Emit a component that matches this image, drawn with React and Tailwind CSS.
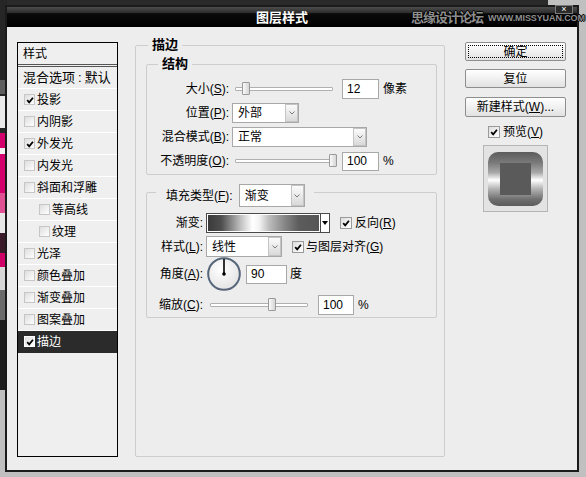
const cjk = "font-['Liberation_Sans','Noto_Sans_CJK_SC',sans-serif]";

const effects = [
  { label: "投影", checked: true },
  { label: "内阴影" },
  { label: "外发光", checked: true },
  { label: "内发光" },
  { label: "斜面和浮雕" },
  { label: "等高线", sub: true },
  { label: "纹理", sub: true },
  { label: "光泽" },
  { label: "颜色叠加" },
  { label: "渐变叠加" },
  { label: "图案叠加" },
  { label: "描边", checked: true, active: true },
];

function Check({ className }) {
  return (
    <svg viewBox="0 0 10 10" className={className}>
      <path d="M1.5 5.2 L4 7.9 L8.7 2.2" fill="none" stroke="currentColor" strokeWidth="2.2" />
    </svg>
  );
}

function CheckBox({ checked, className = "h-[12px] w-[12px] border-[#9a9a9a]" }) {
  return (
    <span className={`flex shrink-0 items-center justify-center border bg-[linear-gradient(135deg,#dedede,#ffffff)] text-black ${className}`}>
      {checked && <Check className="h-[8px] w-[8px]" />}
    </span>
  );
}

function Key({ k }) {
  return (
    <>
      (<span className="underline">{k}</span>)
    </>
  );
}

function Field({ value, className = "h-[20px] w-[37px]" }) {
  return (
    <div className={`flex shrink-0 items-center border border-[#a8a8a8] bg-white pl-[4px] ${className}`}>
      {value}
    </div>
  );
}

function Chevron() {
  return (
    <svg viewBox="0 0 6 4" className="h-[4px] w-[6px]">
      <path d="M0.5 0.5 L3 3 L5.5 0.5" fill="none" stroke="#7a7a7a" strokeWidth="1" />
    </svg>
  );
}

function Select({ value, className }) {
  return (
    <div className={`flex shrink-0 border border-[#a8a8a8] bg-white ${className}`}>
      <span className="flex flex-1 items-center pl-[5px]">{value}</span>
      <span className="flex w-[13px] items-center justify-center border border-[#c4c4c4] bg-[linear-gradient(to_bottom,#fbfbfb,#d9d9d9)]">
        <Chevron />
      </span>
    </div>
  );
}

function Slider({ pos }) {
  // pos: 0..1 along the 98px track
  const left = Math.round(pos * 98) - 2;
  return (
    <div className="relative flex h-[20px] w-[98px] shrink-0 items-center">
      <div className="h-[4px] w-full rounded-[1px] border border-[#b0b0b0] bg-white" />
      <div
        className="absolute top-[3px] h-[13px] w-[8px] rounded-[1px] border border-[#9a9a9a] bg-[linear-gradient(to_right,#fafafa,#d6d6d6)]"
        style={{ left }}
      />
    </div>
  );
}

function Dial() {
  return (
    <svg viewBox="0 0 34 34" className="h-[34px] w-[34px] shrink-0">
      <defs>
        <radialGradient id="dialbg" cx="0.4" cy="0.35" r="0.7">
          <stop offset="0" stopColor="#ffffff" />
          <stop offset="1" stopColor="#e2e2e2" />
        </radialGradient>
      </defs>
      <circle cx="17" cy="17" r="15.8" fill="url(#dialbg)" stroke="#56657a" strokeWidth="2" />
      <line x1="17" y1="17" x2="17" y2="2" stroke="#000" strokeWidth="1.6" />
      <circle cx="17" cy="17" r="1.8" fill="#000" />
    </svg>
  );
}

function Button({ children, focused, className = "" }) {
  return (
    <div className={`relative flex h-[19px] w-[101px] items-center justify-center rounded-[2px] border border-[#8e8e8e] bg-[linear-gradient(to_bottom,#ffffff,#e2e2e2)] ${className}`}>
      {focused && <span className="absolute inset-[2px] border border-dotted border-black" />}
      {children}
    </div>
  );
}

function Backdrop() {
  return (
    <svg className="absolute inset-0" width="586" height="477" viewBox="0 0 586 477">
      <rect width="586" height="477" fill="#c0c0c0" />
      <rect width="548" height="7" fill="#2a2a2a" />
      <rect width="7" height="390" fill="#262626" />
      <rect y="80" width="7" height="14" fill="#5e5e5e" />
      <rect y="96" width="7" height="32" fill="#eaeaea" />
      <rect y="133" width="7" height="60" fill="#d4006c" />
      <rect y="148" width="7" height="6" fill="#f2f2f2" />
      <rect y="193" width="7" height="20" fill="#e05092" />
      <rect y="213" width="7" height="20" fill="#e6e6e6" />
      <rect y="233" width="7" height="20" fill="#3a1a28" />
      <rect y="253" width="7" height="14" fill="#cf0066" />
      <rect y="267" width="7" height="23" fill="#d8d8d8" />
      <rect y="290" width="7" height="30" fill="#6a6a6a" />
      <rect y="320" width="7" height="70" fill="#1e1e1e" />
    </svg>
  );
}

function StyleList() {
  return (
    <div className="mt-[5px] h-[415px] w-[101px] shrink-0 border border-black bg-[#efefef]">
      <div className="flex h-[24px] items-center border-b-[3px] border-double border-[#555555] pl-[5px]">样式</div>
      <div className="flex h-[22px] items-center border-b border-white pl-[5px] text-[13px]">
        混合选项<span className="px-[3px]">:</span>默认
      </div>
      {effects.map((item, i) => (
        <div
          key={i}
          className={`flex h-[22px] items-center border-b ${item.active ? "border-[#2b2b2b] bg-[#2b2b2b] text-white" : "border-white"} ${item.sub ? "pl-[21px]" : "pl-[6px]"}`}
        >
          <CheckBox
            checked={item.checked}
            className={item.active ? "h-[11px] w-[11px] border-white bg-white" : "h-[11px] w-[11px] border-[#c6c6c6]"}
          />
          <span className="ml-[2px]">{item.label}</span>
        </div>
      ))}
    </div>
  );
}

function StrokePanel() {
  return (
    <fieldset className="ml-[17px] h-[420px] w-[310px] shrink-0 rounded-[2px] border border-[#cdcdcd]">
      <legend className="ml-[12px] px-[4px] text-[13px] font-bold leading-[16px]">描边</legend>
      <div className="pl-[10px] pr-[7px]">
        {/* 结构 */}
        <fieldset className="mt-[3px] rounded-[2px] border border-[#cdcdcd]">
          <legend className="ml-[11px] px-[4px] text-[13px] font-bold leading-[16px]">结构</legend>
          <div className="flex flex-col gap-[4px] pb-[3px] pt-[7px]">
            <div className="flex h-[20px] items-center">
              <span className="w-[82px] shrink-0 text-right">大小<Key k="S" />:</span>
              <div className="ml-[6px]"><Slider pos={0.09} /></div>
              <Field value="12" className="ml-[9px] h-[20px] w-[37px]" />
              <span className="ml-[4px]">像素</span>
            </div>
            <div className="flex h-[20px] items-center">
              <span className="w-[82px] shrink-0 text-right">位置<Key k="P" />:</span>
              <Select value="外部" className="ml-[3px] h-[20px] w-[67px]" />
            </div>
            <div className="flex h-[20px] items-center">
              <span className="w-[82px] shrink-0 text-right">混合模式<Key k="B" />:</span>
              <Select value="正常" className="ml-[3px] h-[20px] w-[135px]" />
            </div>
            <div className="flex h-[20px] items-center">
              <span className="w-[82px] shrink-0 text-right">不透明度<Key k="O" />:</span>
              <div className="ml-[6px]"><Slider pos={0.98} /></div>
              <Field value="100" className="ml-[9px] h-[19px] w-[37px]" />
              <span className="ml-[4px]">%</span>
            </div>
          </div>
        </fieldset>

        {/* 填充 */}
        <fieldset className="mt-[9px] rounded-[2px] border border-[#cdcdcd]">
          <legend className="ml-[9px] h-[16px] pl-[10px] pr-[9px]">
            <div className="flex h-[23px] items-center">
              <span>填充类型<Key k="F" />:</span>
              <Select value="渐变" className="ml-[6px] h-[23px] w-[66px]" />
            </div>
          </legend>
          <div className="flex flex-col pb-[2px] pt-[13px]">
            <div className="flex h-[20px] items-center">
              <span className="w-[56px] shrink-0 text-right">渐变:</span>
              <div className="ml-[3px] flex h-[20px] border border-[#4a4a4a] bg-white">
                <div className="w-[113px] border border-white bg-[linear-gradient(to_right,#3a3a3a_0%,#4e4e4e_12%,#c4c4c4_30%,#ffffff_40%,#f4f4f4_46%,#bdbdbd_55%,#8a8a8a_68%,#5c5c5c_82%,#555555_100%)]" />
                <div className="flex w-[9px] items-center justify-center border-l border-[#4a4a4a]">
                  <svg viewBox="0 0 6 4" className="h-[4px] w-[6px]"><path d="M0 0 L6 0 L3 4 Z" fill="#000" /></svg>
                </div>
              </div>
              <CheckBox checked className="ml-[10px] h-[12px] w-[12px] border-[#9a9a9a]" />
              <span className="ml-[3px]">反向<Key k="R" /></span>
            </div>
            <div className="mt-[3px] flex h-[21px] items-center">
              <span className="w-[56px] shrink-0 text-right">样式<Key k="L" />:</span>
              <Select value="线性" className="ml-[3px] h-[21px] w-[76px]" />
              <CheckBox checked className="ml-[10px] h-[12px] w-[12px] border-[#9a9a9a]" />
              <span className="ml-[2px]">与图层对齐<Key k="G" /></span>
            </div>
            <div className="flex h-[34px] items-center">
              <span className="w-[56px] shrink-0 text-right">角度<Key k="A" />:</span>
              <div className="ml-[4px]"><Dial /></div>
              <Field value="90" className="ml-[5px] h-[19px] w-[41px]" />
              <span className="ml-[3px]">度</span>
            </div>
            <div className="mt-[4px] flex h-[20px] items-center">
              <span className="w-[56px] shrink-0 text-right">缩放<Key k="C" />:</span>
              <div className="ml-[7px]"><Slider pos={0.61} /></div>
              <Field value="100" className="ml-[10px] h-[20px] w-[36px]" />
              <span className="ml-[4px]">%</span>
            </div>
          </div>
        </fieldset>
      </div>
    </fieldset>
  );
}

function SidePanel() {
  return (
    <div className="ml-[20px] mt-[5px] flex w-[101px] shrink-0 flex-col items-center">
      <Button focused>确定</Button>
      <Button className="mt-[8px]">复位</Button>
      <Button className="mt-[9px] h-[20px]">新建样式<Key k="W" />...</Button>
      <div className="mt-[9px] flex h-[12px] items-center">
        <CheckBox checked className="h-[12px] w-[12px] border-[#9a9a9a]" />
        <span className="ml-[3px]">预览<Key k="V" /></span>
      </div>
      <div className="mt-[7px] flex h-[67px] w-[65px] items-center justify-center border border-[#b5b5b5] bg-[#e3e3e3]">
        <div className="flex h-[54px] w-[55px] items-center justify-center rounded-[10px] bg-[linear-gradient(to_bottom,#5c5c5c_0%,#7a7a7a_20%,#a8a8a8_38%,#ffffff_52%,#b4b4b4_68%,#6e6e6e_88%,#5c5c5c_100%)]">
          <div className="h-[32px] w-[31px] bg-[#5a5a5a]" />
        </div>
      </div>
    </div>
  );
}

export default function App() {
  return (
    <div className="relative h-[477px] w-[586px] overflow-hidden pl-[5px] pt-[5px]">
      <Backdrop />
      <div className="relative h-[467px] w-[574px] border-2 border-[#1b1b1b]">
        {/* Title bar */}
        <div className={`relative flex h-[20px] items-center bg-[linear-gradient(to_bottom,#4d4d4d_0%,#2c2c2c_30%,#0a0a0a_33%,#000000_100%)] ${cjk}`}>
          <span className="ml-[249px] text-[13px] font-bold leading-none text-white">图层样式</span>
          <div className="absolute left-[404px] top-[3px] flex items-center whitespace-nowrap font-bold text-[#8e8e8e] [text-shadow:1px_0_0_#000,-1px_0_0_#000,0_1px_0_#000,0_-1px_0_#000]">
            <span className="text-[13px] leading-[15px] tracking-[-1px]">思缘设计论坛</span>
            <span className="ml-[5px] mt-[2px] text-[9px] leading-[13px] tracking-[-0.1px]">WWW.MISSYUAN.COM</span>
          </div>
          <div className="absolute left-[548px] top-[-2px] flex h-[9px] w-[18px] items-center justify-center border border-[#7a7a7a] bg-[#2a2a2a] text-[9px] leading-none text-white">
            ×
          </div>
        </div>

        {/* Content */}
        <div className={`flex h-[443px] bg-[#ededed] pl-[10px] pt-[10px] text-[12px] leading-none text-black ${cjk}`}>
          <StyleList />
          <StrokePanel />
          <SidePanel />
        </div>
      </div>
    </div>
  );
}
